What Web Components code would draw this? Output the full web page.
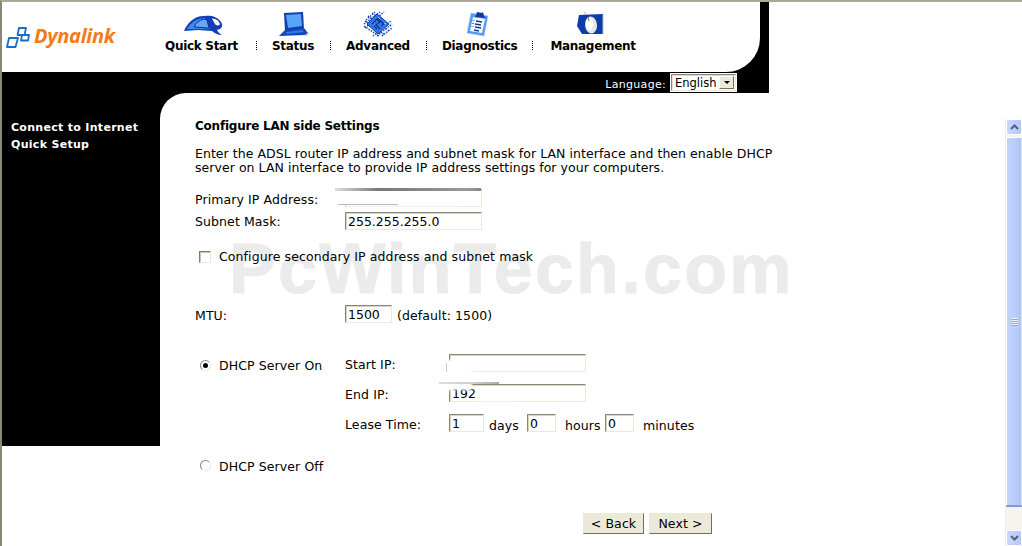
<!DOCTYPE html>
<html>
<head>
<meta charset="utf-8">
<title>Configure LAN side Settings</title>
<style>
  html, body { margin: 0; background: #fff; height: 100%; overflow: hidden; }
</style>
</head>
<body>

<router-app>
  <router-header slot="top">
    <dyna-logo slot="logo"></dyna-logo>
    <nav-item slot="nav" label="Quick Start">
      <svg width="42" height="26" viewBox="0 0 42 26" style="margin-left:3px">
        <path d="M2 20C5 13 11 5 22 5c6-1 13 0 17 6 2 3 1 6-1 7l-3 1c1 2 3 4 5 5-4 0-8-2-10-4l-14-1c-5 0-10 1-14 1z" fill="#1140b8"/>
        <path d="M5 18C9 12 14 7 23 7l5 11-15 0c-3 0-6 0-8 0z" fill="#3f8cf0"/>
        <path d="M22 8c-5 1-8 4-10 8l15 1-2-8z" fill="#6aa8f4" stroke="#0d2f96" stroke-width="1"/>
        <path d="M29 7c4 0 7 1 9 5 1 2-1 3-3 3l-2-1z" fill="#fff" stroke="#0d2f96" stroke-width="1"/>
      </svg>
    </nav-item>
    <nav-sep slot="nav" style="margin:0 15px 3px 18px"></nav-sep>
    <nav-item slot="nav" label="Status">
      <svg width="32" height="26" viewBox="0 0 32 26">
        <path d="M7 2l19-1 1 17-19 2z" fill="#0f3fae"/>
        <path d="M9 4l15-1 1 12-14 2z" fill="#57a5f6"/>
        <path d="M8 19l19-2 4 5-3 2-26 1z" fill="#1146bc"/>
        <path d="M9 21l16-2 2 2-17 2z" fill="#2f7be0"/>
        <path d="M28 24l3-2 1 1-3 2z" fill="#c8c4b0"/>
      </svg>
    </nav-item>
    <nav-sep slot="nav" style="margin:0 15px 3px 16px"></nav-sep>
    <nav-item slot="nav" label="Advanced">
      <svg width="32" height="26" viewBox="0 0 32 26">
        <g stroke="#1340b0" stroke-width="1.4" stroke-dasharray="1.5 1.2">
          <path d="M4 9L13 1M2 13L18 1M3 17L22 1"/>
          <path d="M11 25L29 10M15 25L30 13M20 25L30 17"/>
          <path d="M10 2L29 15M6 5L27 20M3 10L23 24M2 15L17 25"/>
        </g>
        <path d="M15 3l12 10-11 10L5 13z" fill="#2f79e4" stroke="#0f38a4"/>
        <path d="M10 13l5-5 3 3-4 3 4 4M15 7l7 6-3 2M12 15l3 3" fill="none" stroke="#0d2f96" stroke-width="1.1"/>
        <path d="M16 6l2 2M22 12l2 1" stroke="#8fc3fa" stroke-width="1"/>
      </svg>
    </nav-item>
    <nav-sep slot="nav" style="margin:0 15px 3px 16px"></nav-sep>
    <nav-item slot="nav" label="Diagnostics">
      <svg width="24" height="26" viewBox="0 0 24 26" style="margin-right:3px">
        <path d="M5 2l17 3-4 20-17-3z" fill="#4f9cf2" stroke="#9cc6f6" stroke-width=".6"/>
        <path d="M7 6l12 2-3 14-12-2z" fill="#fff"/>
        <path d="M10 4l1-3 5 1 1-1 1 4 2 2-11-1z" fill="#0e37a4"/>
        <path d="M10 10l6 1M9 13l6 1M9 16l6 1M8 19l5 1" stroke="#12359a" stroke-width="1.3"/>
        <path d="M6.500 9l1 1 1-1M6 12l1 1 1-1M5.500 15l1 1 1-1" stroke="#3a78d8" fill="none" stroke-width=".9"/>
      </svg>
    </nav-item>
    <nav-sep slot="nav" style="margin:0 17px 3px 15px"></nav-sep>
    <nav-item slot="nav" label="Management">
      <svg width="28" height="26" viewBox="0 0 28 26" style="margin-right:6px">
        <path d="M8 1l3 4" stroke="#9ab4dc" stroke-width="1"/>
        <path d="M3 4l24-1 0 20-21 0-5-8z" fill="#0a3cab"/>
        <path d="M27 4v19" stroke="#c7c2a8" stroke-width="1"/>
        <ellipse cx="15" cy="14" rx="6" ry="8.500" fill="#e6e6e6" transform="rotate(-6 15 14)"/>
        <ellipse cx="13.500" cy="13" rx="3.500" ry="6.500" fill="#fff"/>
        <path d="M12 6l1 4" stroke="#707070" stroke-width="1"/>
      </svg>
    </nav-item>
    <lang-bar slot="lang"><win-select>English</win-select></lang-bar>
  </router-header>

  <side-menu slot="side">
    <span>Connect to Internet</span>
    <span>Quick Setup</span>
  </side-menu>

  <lan-settings slot="main"></lan-settings>

  <win-scrollbar slot="scroll"></win-scrollbar>
</router-app>

<template id="lan-settings-tpl">
  <style>
    :host {
      display: block;
      position: relative;
      box-sizing: border-box;
      height: 100%;
      padding: 26px 0 0 35px;
      background: #fff;
      border-top-left-radius: 26px;
      font: 12.5px/14px "DejaVu Sans", Verdana, sans-serif;
      letter-spacing: .1px;
      color: #000;
    }
    .mark {
      position: absolute;
      left: 69px;
      top: 141px;
      font: bold 70px/70px "Liberation Sans", Arial, sans-serif;
      letter-spacing: 2.300px;
      -webkit-text-stroke: 1px #ebebeb;
      color: #ebebeb;
      white-space: nowrap;
    }
    .layer { position: relative; display: flex; flex-direction: column; }
    h1 { margin: 0; font: bold 12px/14px "DejaVu Sans", Verdana, sans-serif; letter-spacing: -.22px; }
    p { margin: 14px 0 0; width: 590px; letter-spacing: .05px; }
    .row { display: flex; align-items: flex-start; }
    .row > .lab { width: 150px; padding-top: 4px; }
    .r-primary { margin-top: 14px; height: 18px; }
    .r-subnet { margin-top: 5px; height: 18px; }
    .r-subnet > .lab { padding-top: 3px; }
    .r-check { margin-top: 20px; height: 14px; align-items: center; padding-left: 4px; gap: 8px; }
    .r-mtu { margin-top: 41px; height: 18px; }
    .r-mtu .hint { margin-left: 5px; padding-top: 4px; }
    .dhcp { margin-top: 31px; display: flex; }
    .dhcp-left { width: 150px; display: flex; align-items: center; gap: 8px; padding-left: 5px; box-sizing: border-box; height: 22px; align-self: flex-start; }
    .dhcp-left span { padding-top: 2px; }
    .dhcp-right { display: flex; flex-direction: column; gap: 12px; }
    .dhcp-right .row > .lab { width: 104px; padding-top: 4px; }
    .unit { padding-top: 5px; }
    .r-off { margin-top: 26px; height: 14px; align-items: center; padding-left: 5px; gap: 8px; }
    .r-off span { padding-top: 4px; }
    .buttons { margin-top: 41px; display: flex; gap: 5px; padding-left: 388px; }
    .smudge { position: absolute; background: #fff; filter: blur(1.2px); }
    .streak { position: absolute; filter: blur(.6px); }
  </style>
  <div class="mark">PcWinTech.com</div>
  <div class="layer">
    <h1>Configure LAN side Settings</h1>
    <p>Enter the ADSL router IP address and subnet mask for LAN interface and then enable DHCP server on LAN interface to provide IP address settings for your computers.</p>

    <div class="row r-primary">
      <span class="lab">Primary IP Address:</span>
      <win-input style="width:137px">
        <span class="smudge" style="left:-14px;top:-1px;width:130px;height:17px"></span>
        <span class="streak" style="left:-11px;top:-2px;width:146px;height:3px;background:linear-gradient(90deg,#ddd,#777 30%,#999 90%,#8a8678)"></span>
        <span class="streak" style="left:-8px;top:14px;width:60px;height:1px;background:#bbb"></span>
      </win-input>
    </div>
    <div class="row r-subnet">
      <span class="lab">Subnet Mask:</span>
      <win-input style="width:137px">255.255.255.0</win-input>
    </div>
    <div class="row r-check">
      <win-check></win-check>
      <span>Configure secondary IP address and subnet mask</span>
    </div>
    <div class="row r-mtu">
      <span class="lab">MTU:</span>
      <win-input style="width:47px">1500</win-input>
      <span class="hint">(default: 1500)</span>
    </div>

    <div class="dhcp">
      <div class="dhcp-left"><win-radio checked></win-radio><span>DHCP Server On</span></div>
      <div class="dhcp-right">
        <div class="row">
          <span class="lab">Start IP:</span>
          <win-input style="width:137px">
            <span class="smudge" style="left:-3px;top:5px;width:24px;height:14px"></span>
            <span class="streak" style="left:-4px;top:8px;width:1px;height:9px;background:#ccc"></span>
          </win-input>
        </div>
        <div class="row">
          <span class="lab">End IP:</span>
          <win-input style="width:137px">192.168
            <span class="smudge" style="left:26px;top:2px;width:40px;height:14px"></span>
            <span class="smudge" style="left:-13px;top:-4px;width:35px;height:9px"></span>
            <span class="streak" style="left:-11px;top:-3px;width:60px;height:2px;background:linear-gradient(90deg,#ddd,#ccc 60%,#aaa)"></span>
          </win-input>
        </div>
        <div class="row" style="height:18px">
          <span class="lab">Lease Time:</span>
          <win-input style="width:35px">1</win-input>
          <span class="unit" style="margin-left:5px;width:38px">days</span>
          <win-input style="width:29px">0</win-input>
          <span class="unit" style="margin-left:9px;width:40px">hours</span>
          <win-input style="width:29px">0</win-input>
          <span class="unit" style="margin-left:9px">minutes</span>
        </div>
      </div>
    </div>

    <div class="row r-off">
      <win-radio></win-radio><span>DHCP Server Off</span>
    </div>

    <div class="buttons">
      <win-button style="width:61px">&lt; Back</win-button>
      <win-button style="width:63px">Next &gt;</win-button>
    </div>
  </div>
</template>

<script>
function define(name, css, html) {
  customElements.define(name, class extends HTMLElement {
    constructor() {
      super();
      this.attachShadow({ mode: "open" });
      this.shadowRoot.innerHTML = `<style>${css}</style>${html}`;
    }
  });
}

define("router-app", `
  :host {
    display: block;
    box-sizing: border-box;
    width: 1022px;
    height: 546px;
    overflow: hidden;
    background: #fff;
    border-top: 2px solid #aca899;
    border-left: 2px solid #8c8878;
  }
  .lower { display: flex; height: 453px; }
  .side { flex: none; }
  .main { flex: 1; margin-left: -26px; position: relative; min-width: 0; }
  .scroll { flex: none; }
`, `
  <slot name="top"></slot>
  <div class="lower">
    <div class="side"><slot name="side"></slot></div>
    <div class="main"><slot name="main"></slot></div>
    <div class="scroll"><slot name="scroll"></slot></div>
  </div>
`);

define("router-header", `
  :host { display: block; width: 767px; height: 91px; background: #000; }
  .panel {
    display: flex;
    box-sizing: border-box;
    width: 758px;
    height: 70px;
    background: #fff;
    border-bottom-right-radius: 34px;
    padding-top: 9px;
  }
  .nav { display: flex; align-items: flex-end; height: 42px; }
`, `
  <div class="panel">
    <slot name="logo"></slot>
    <div class="nav"><slot name="nav"></slot></div>
  </div>
  <slot name="lang"></slot>
`);

define("dyna-logo", `
  :host { display: flex; flex: none; width: 163px; height: 42px; box-sizing: border-box; padding: 14px 0 0 4px; gap: 3px; align-items: flex-start; }
  span {
    font: italic bold 20px/22px "Open Sans", "Liberation Sans", sans-serif;
    color: #f47a1a;
    letter-spacing: -.3px;
  }
`, `
  <svg width="25" height="22" viewBox="0 0 25 22" style="margin-top:2px">
    <g fill="none" stroke="#1a6cc6" stroke-width="1.8" stroke-linejoin="round">
      <path d="M3 11h9l-2.500 9H1z"/>
      <path d="M13 1h7l-1.500 7H11.500z"/>
      <path d="M16 8h7l-1 5.500h-7z"/>
    </g>
  </svg>
  <span>Dynalink</span>
`);

customElements.define("nav-item", class extends HTMLElement {
  constructor() {
    super();
    this.attachShadow({ mode: "open" });
    this.shadowRoot.innerHTML = `
      <style>
        :host { display: flex; flex-direction: column; align-items: center; height: 42px; justify-content: flex-end; }
        .icon { height: 26px; display: flex; justify-content: center; margin-bottom: 2px; }
        .label { font: bold 12px/14px "DejaVu Sans", Verdana, sans-serif; letter-spacing: -.3px; color: #000; white-space: nowrap; }
      </style>
      <div class="icon"><slot></slot></div>
      <div class="label"></div>`;
  }
  connectedCallback() {
    this.shadowRoot.querySelector(".label").textContent = this.getAttribute("label");
  }
});

define("nav-sep", `
  :host {
    display: block;
    flex: none;
    width: 1px;
    height: 9px;
    margin: 0 16px 3px;
    background: repeating-linear-gradient(#000 0 1px, transparent 1px 2px);
  }
`, ``);

define("lang-bar", `
  :host { display: flex; justify-content: flex-end; align-items: flex-start; gap: 4px; height: 21px; padding: 1px 32px 0 0; box-sizing: border-box; }
  span { font: 11px/24px "DejaVu Sans", Verdana, sans-serif; color: #fff; letter-spacing: .3px; }
`, `<span>Language:</span><slot></slot>`);

define("win-select", `
  :host { display: flex; box-sizing: border-box; width: 67px; height: 19px; background: #fff; border: 1px solid #fff; }
  .box { flex: 1; display: flex; align-items: center; border: 1px solid; border-color: #8a8678 #ece9d8 #ece9d8 #8a8678; box-shadow: inset 1px 1px 0 #e0ddd0; font: 11.500px/14px "DejaVu Sans", Verdana, sans-serif; color: #000; padding-left: 3px; justify-content: space-between; }
  .btn { width: 15px; height: 13px; margin-right: 1px; background: #ece9d8; border: 1px solid; border-color: #fff #716f64 #716f64 #fff; box-sizing: border-box; display: flex; align-items: center; justify-content: center; }
  .btn::after { content: ""; border: 3px solid transparent; border-top-color: #000; border-bottom: 0; }
`, `<div class="box"><slot></slot><div class="btn"></div></div>`);

define("side-menu", `
  :host {
    display: flex;
    flex-direction: column;
    box-sizing: border-box;
    width: 184px;
    height: 353px;
    background: #000;
    color: #fff;
    padding: 26px 0 0 9px;
    font: bold 11px/17px "DejaVu Sans", Verdana, sans-serif;
    letter-spacing: .3px;
  }
`, `<slot></slot>`);

define("win-input", `
  :host {
    display: block;
    flex: none;
    position: relative;
    box-sizing: border-box;
    height: 18px;
    padding-left: 2px;
    border: 1px solid;
    border-color: #8a8678 #ece9d8 #ece9d8 #8a8678;
    box-shadow: inset 1px 1px 0 #d8d5c8;
    font: 12.5px/18px "DejaVu Sans", Verdana, sans-serif;
    letter-spacing: 0;
    background: transparent;
    white-space: nowrap;
  }
`, `<slot></slot>`);

define("win-check", `
  :host {
    display: block;
    flex: none;
    box-sizing: border-box;
    width: 12px;
    height: 12px;
    border: 1px solid;
    border-color: #807c6c #ece9d8 #ece9d8 #807c6c;
    box-shadow: inset 1px 1px 0 #c8c5b4;
    background: #fff;
  }
`, ``);

define("win-radio", `
  :host {
    display: block;
    flex: none;
    position: relative;
    box-sizing: border-box;
    width: 11px;
    height: 11px;
    border-radius: 50%;
    border: 1px solid;
    border-color: #8a8678 #ece9d8 #ece9d8 #8a8678;
    background: #fff;
  }
  :host([checked])::after {
    content: "";
    position: absolute;
    left: 2px;
    top: 2px;
    width: 5px;
    height: 5px;
    border-radius: 50%;
    background: #000;
  }
`, ``);

define("win-button", `
  :host {
    display: flex;
    align-items: center;
    justify-content: center;
    box-sizing: border-box;
    height: 21px;
    background: #ece9d8;
    border: 1px solid;
    border-color: #ece9d8 #716f64 #716f64 #ece9d8;
    font: 12.5px/14px "DejaVu Sans", Verdana, sans-serif;
    letter-spacing: .1px;
    color: #000;
  }
`, `<slot></slot>`);

define("win-scrollbar", `
  :host {
    display: flex;
    flex-direction: column;
    box-sizing: border-box;
    width: 17px;
    height: 427px;
    margin-top: 26px;
    background: #f4f3ee;
    border-left: 1px solid #ededed;
  }
  .arrow {
    flex: none;
    height: 16px;
    display: flex;
    align-items: center;
    justify-content: center;
    background: linear-gradient(90deg, #c9d8fb, #b5c9f7);
    border: 1px solid #fff;
    border-radius: 2px;
    box-sizing: border-box;
  }
  .arrow svg { display: block; }
  .thumb {
    flex: none;
    height: 369px;
    margin-top: 2px;
    box-sizing: border-box;
    background: linear-gradient(90deg, #c2d3fb, #bacdf9 60%, #aec4f6);
    border: 1px solid #fff;
    border-bottom-color: #7f9bd6;
    border-right-color: #dfe7fb;
    box-shadow: 0 1px 0 #7f9bd6;
    display: flex;
    align-items: center;
    justify-content: center;
  }
  .grip {
    width: 7px;
    height: 8px;
    background: repeating-linear-gradient(#eef3ff 0 1px, #8aa6e4 1px 2px);
  }
  .track { flex: 1; }
`, `
  <div class="arrow"><svg width="9" height="6" viewBox="0 0 9 6"><path d="M1 5l3.500-3.500L8 5" fill="none" stroke="#4d6185" stroke-width="2"/></svg></div>
  <div class="thumb"><div class="grip"></div></div>
  <div class="track"></div>
  <div class="arrow"><svg width="9" height="6" viewBox="0 0 9 6"><path d="M1 1l3.500 3.500L8 1" fill="none" stroke="#4d6185" stroke-width="2"/></svg></div>
`);

customElements.define("lan-settings", class extends HTMLElement {
  constructor() {
    super();
    this.attachShadow({ mode: "open" });
    const tpl = document.getElementById("lan-settings-tpl");
    this.shadowRoot.appendChild(tpl.content.cloneNode(true));
  }
});
</script>
</body>
</html>
